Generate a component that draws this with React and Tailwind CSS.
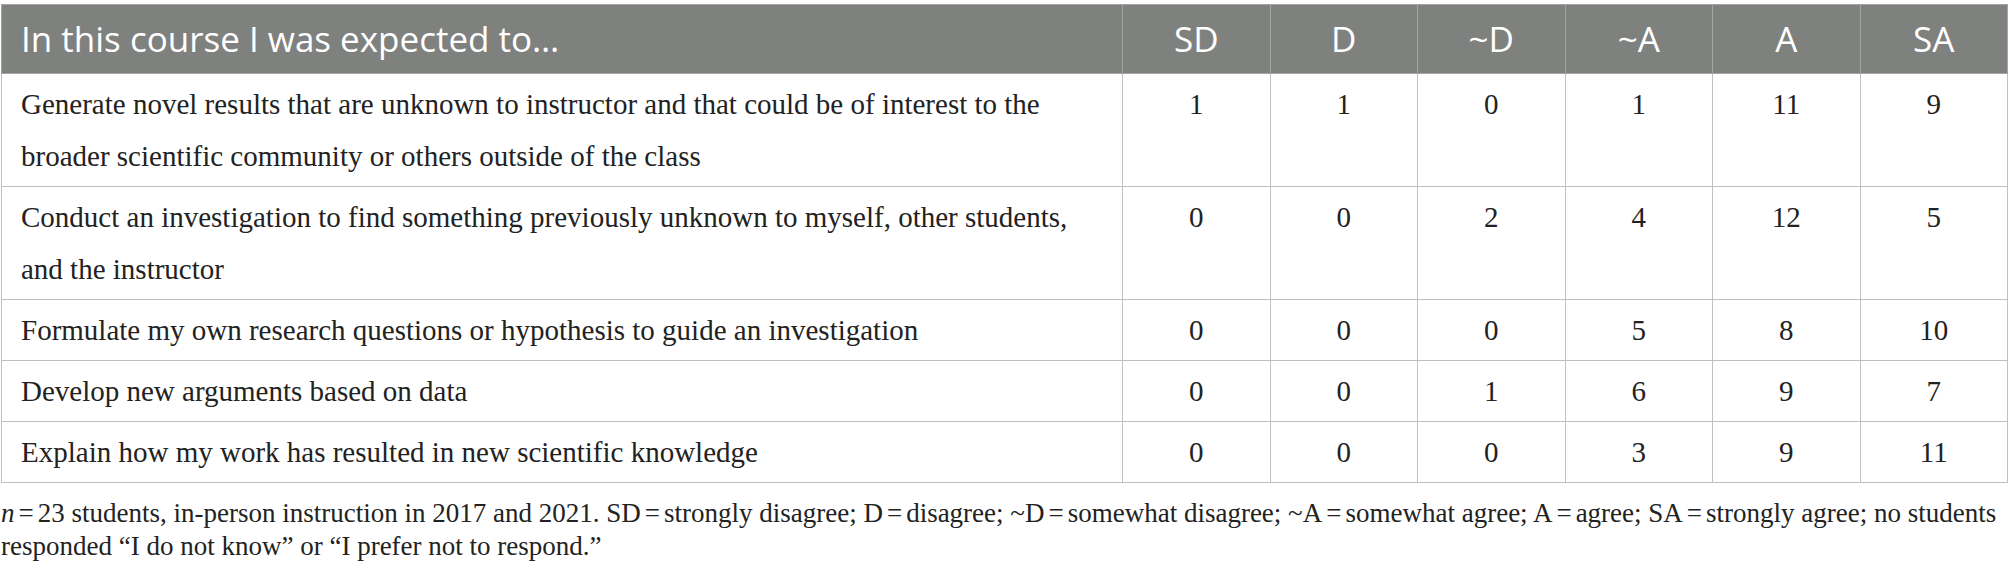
const ROWS = [
  {
    label:
      "Generate novel results that are unknown to instructor and that could be of interest to the broader scientific community or others outside of the class",
    values: [1, 1, 0, 1, 11, 9],
  },
  {
    label:
      "Conduct an investigation to find something previously unknown to myself, other students, and the instructor",
    values: [0, 0, 2, 4, 12, 5],
  },
  {
    label: "Formulate my own research questions or hypothesis to guide an investigation",
    values: [0, 0, 0, 5, 8, 10],
  },
  { label: "Develop new arguments based on data", values: [0, 0, 1, 6, 9, 7] },
  {
    label: "Explain how my work has resulted in new scientific knowledge",
    values: [0, 0, 0, 3, 9, 11],
  },
];

const COLS = ["SD", "D", "~D", "~A", "A", "SA"];

// tight "=" as typeset in the journal footnote
const Eq = () => <span className="mx-[4px]">=</span>;

export default function App() {
  return (
    <div className="w-[2008px] h-[574px] bg-white pt-[4px] px-[1px]">
      <table className="w-[2006px] table-fixed border-collapse border border-[#c0c0c0]">
        <colgroup>
          <col className="w-[1121px]" />
          {COLS.map((c) => (
            <col key={c} className="w-[147.5px]" />
          ))}
        </colgroup>
        <thead>
          <tr className="bg-[#7f817f] h-[69px] text-white font-['Open_Sans',sans-serif] text-[35px]">
            <th className="text-left font-normal px-[19px] border border-[#a3a5a3]">
              In this course I was expected to…
            </th>
            {COLS.map((c) => (
              <th key={c} className="font-normal text-center border border-[#a3a5a3]">
                {c}
              </th>
            ))}
          </tr>
        </thead>
        <tbody className="font-['Liberation_Serif',serif] text-[29px] text-[#222] leading-[52px]">
          {ROWS.map((r) => (
            <tr key={r.label}>
              <td className="align-top px-[19px] py-[4px] border border-[#c0c0c0]">{r.label}</td>
              {r.values.map((v, i) => (
                <td key={i} className="align-top text-center py-[4px] border border-[#c0c0c0]">
                  {v}
                </td>
              ))}
            </tr>
          ))}
        </tbody>
      </table>
      <div className="font-['Liberation_Serif',serif] text-[27px] text-[#222] leading-[33px] mt-[14px]">
        <p className="whitespace-nowrap">
          <i>n</i>
          <Eq />
          23 students, in-person instruction in 2017 and 2021. SD<Eq />
          strongly disagree; D<Eq />
          disagree; ~D<Eq />
          somewhat disagree; ~A<Eq />
          somewhat agree; A<Eq />
          agree; SA<Eq />
          strongly agree; no students
        </p>
        <p>responded “I do not know” or “I prefer not to respond.”</p>
      </div>
    </div>
  );
}
